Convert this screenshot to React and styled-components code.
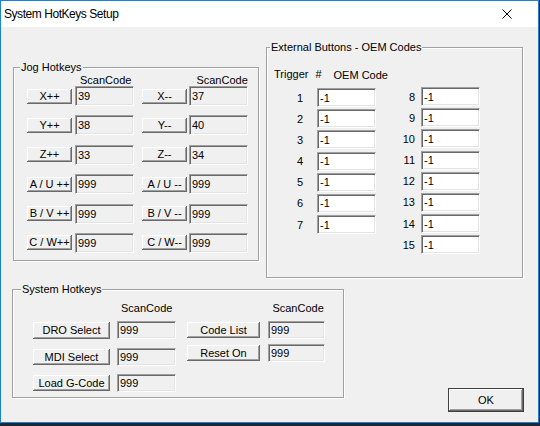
import React from "react";
import styled, { createGlobalStyle } from "styled-components";

const GlobalStyle = createGlobalStyle`
  html, body {
    margin: 0;
    padding: 0;
    background: #1d2733;
  }
  body {
    width: 540px;
    height: 426px;
    overflow: hidden;
    font-family: "Liberation Sans", Arial, sans-serif;
    font-size: 11px;
    color: #000;
  }
  * { box-sizing: border-box; }
`;

const jogRows = [
  ["X++", "39", "X--", "37"],
  ["Y++", "38", "Y--", "40"],
  ["Z++", "33", "Z--", "34"],
  ["A / U ++", "999", "A / U --", "999"],
  ["B / V ++", "999", "B / V --", "999"],
  ["C / W++", "999", "C / W--", "999"],
];

const Window = styled.div`
  width: 539px;
  height: 423px;
  border: 1px solid #1883d7;
  background: #f0f0f0;
  display: flex;
  flex-direction: column;
`;

const TitleBar = styled.div`
  height: 26px;
  background: #fff;
  display: flex;
  align-items: center;
  justify-content: space-between;
  padding: 0 26px 0 3px;
  flex-shrink: 0;
`;

const Title = styled.span`
  font-family: "Liberation Sans", Arial, sans-serif;
  font-size: 12px;
  letter-spacing: -0.45px;
  color: #000;
`;

const Body = styled.div`
  display: flex;
  flex-direction: column;
`;

const TopRow = styled.div`
  display: flex;
  align-items: flex-start;
  padding-left: 12px;
`;

const BottomRow = styled.div`
  display: flex;
  align-items: flex-start;
  padding-left: 11px;
  margin-top: 11px;
`;

const Group = styled.div`
  position: relative;
  width: ${(p) => p.w}px;
  height: ${(p) => p.h}px;
  margin-top: ${(p) => p.top || 0}px;
  margin-left: ${(p) => p.left || 0}px;
  border: 1px solid #a0a0a0;
  box-shadow: inset 1px 1px 0 #fff, 1px 1px 0 #fff;
`;

const Legend = styled.span`
  position: absolute;
  top: -7px;
  left: ${(p) => p.x}px;
  padding: 0 1px;
  line-height: 13px;
  background: #f0f0f0;
  white-space: nowrap;
`;

const Header = styled.div`
  display: flex;
  height: 12px;
  line-height: 12px;
  margin-top: ${(p) => p.top}px;
`;

const HeaderText = styled.span`
  display: block;
  margin-left: ${(p) => p.x}px;
  white-space: nowrap;
`;

const Btn = styled.button`
  width: ${(p) => p.w}px;
  height: ${(p) => p.h}px;
  margin: 0;
  padding: 0;
  background: #f0f0f0;
  font-family: "Liberation Sans", Arial, sans-serif;
  font-size: 11px;
  color: #000;
  border: none;
  box-shadow: inset -1px -1px 0 #696969, inset 1px 1px 0 #fff,
    inset -2px -2px 0 #a0a0a0;
  white-space: nowrap;
  line-height: 1;
  cursor: pointer;
`;

const Field = styled.div`
  width: ${(p) => p.w}px;
  height: ${(p) => p.h}px;
  margin-left: ${(p) => p.left || 0}px;
  background: ${(p) => (p.white ? "#fff" : "#f0f0f0")};
  border-top: 1px solid #a0a0a0;
  border-left: 1px solid #a0a0a0;
  border-bottom: 1px solid #fff;
  border-right: 1px solid #fff;
  box-shadow: inset 1px 1px 0 #696969, inset -1px -1px 0 #e3e3e3;
  padding-left: 2px;
  display: flex;
  align-items: center;
  white-space: nowrap;
`;

const JogList = styled.div`
  display: flex;
  flex-direction: column;
  gap: 9.4px;
  padding-left: 13px;
`;

const JogRow = styled.div`
  display: flex;
  align-items: center;
  height: 20px;
`;

const Pair = styled.div`
  display: flex;
  align-items: center;
  gap: ${(p) => p.gap}px;
  margin-left: ${(p) => p.left || 0}px;
`;

const OemHead = styled.div`
  display: flex;
  align-items: baseline;
  margin-top: 20px;
  padding-left: 7px;
  height: 13px;
  line-height: 13px;
`;

const OemHeadText = styled.span`
  margin-left: ${(p) => p.x || 0}px;
  white-space: nowrap;
  position: relative;
  top: ${(p) => p.dy || 0}px;
`;

const OemCols = styled.div`
  display: flex;
  align-items: flex-start;
  margin-top: 6px;
`;

const OemCol = styled.div`
  display: flex;
  flex-direction: column;
  gap: 2.2px;
  margin-top: ${(p) => p.top || 0}px;
  margin-left: ${(p) => p.left}px;
`;

const OemRow = styled.div`
  display: flex;
  align-items: center;
  height: 19px;
`;

const Num = styled.span`
  width: ${(p) => p.w}px;
  text-align: right;
  margin-right: ${(p) => p.gap}px;
`;

const SysCols = styled.div`
  display: flex;
  align-items: flex-start;
  margin-top: 7px;
`;

const SysCol = styled.div`
  display: flex;
  flex-direction: column;
  margin-left: ${(p) => p.left}px;
`;

const SysRow = styled.div`
  display: flex;
  align-items: center;
  height: 18px;
  margin-top: ${(p) => p.top}px;
`;

const OkButton = styled.button`
  width: 76px;
  height: 24px;
  margin: 99px 0 0 104px;
  padding: 0;
  background: #f0f0f0;
  font-family: "Liberation Sans", Arial, sans-serif;
  font-size: 11px;
  color: #000;
  border: 1px solid #404040;
  box-shadow: inset -1px -1px 0 #696969, inset 1px 1px 0 #fff,
    inset -2px -2px 0 #a0a0a0;
  cursor: pointer;
`;

const CloseIcon = () => (
  <svg width="10" height="10" viewBox="0 0 10 10">
    <path d="M0.5 0.5 L9.5 9.5 M9.5 0.5 L0.5 9.5" stroke="#000" strokeWidth="1" fill="none" />
  </svg>
);

const App = () => {
  const oemLeft = [1, 2, 3, 4, 5, 6, 7];
  const oemRight = [8, 9, 10, 11, 12, 13, 14, 15];

  return (
    <>
      <GlobalStyle />
      <Window>
        <TitleBar>
          <Title>System HotKeys Setup</Title>
          <CloseIcon />
        </TitleBar>
        <Body>
          <TopRow>
            <Group w={246} h={194} top={40}>
              <Legend x={6}>Jog Hotkeys</Legend>
              <Header top={6}>
                <HeaderText x={66}>ScanCode</HeaderText>
                <HeaderText x={65}>ScanCode</HeaderText>
              </Header>
              <JogList>
                {jogRows.map(([a, av, b, bv]) => (
                  <JogRow key={a}>
                    <Pair gap={3}>
                      <Btn w={45} h={15}>{a}</Btn>
                      <Field w={59} h={20}>{av}</Field>
                    </Pair>
                    <Pair gap={2} left={8}>
                      <Btn w={45} h={15}>{b}</Btn>
                      <Field w={59} h={20}>{bv}</Field>
                    </Pair>
                  </JogRow>
                ))}
              </JogList>
            </Group>

            <Group w={257} h={231} top={20} left={7}>
              <Legend x={3}>External Buttons - OEM Codes</Legend>
              <OemHead>
                <OemHeadText>Trigger</OemHeadText>
                <OemHeadText x={7}>#</OemHeadText>
                <OemHeadText x={12} dy={1}>OEM Code</OemHeadText>
              </OemHead>
              <OemCols>
                <OemCol left={0} top={1}>
                  {oemLeft.map((n) => (
                    <OemRow key={n}>
                      <Num w={36} gap={14}>{n}</Num>
                      <Field w={59} h={19} white>-1</Field>
                    </OemRow>
                  ))}
                </OemCol>
                <OemCol left={9}>
                  {oemRight.map((n) => (
                    <OemRow key={n}>
                      <Num w={30} gap={6}>{n}</Num>
                      <Field w={59} h={19} white>-1</Field>
                    </OemRow>
                  ))}
                </OemCol>
              </OemCols>
            </Group>
          </TopRow>

          <BottomRow>
            <Group w={332} h={109}>
              <Legend x={8}>System Hotkeys</Legend>
              <Header top={12}>
                <HeaderText x={108}>ScanCode</HeaderText>
                <HeaderText x={100}>ScanCode</HeaderText>
              </Header>
              <SysCols>
                <SysCol left={20}>
                  <SysRow top={0}>
                    <Btn w={77} h={17}>DRO Select</Btn>
                    <Field w={59} h={18} left={7}>999</Field>
                  </SysRow>
                  <SysRow top={9}>
                    <Btn w={77} h={16}>MDI Select</Btn>
                    <Field w={59} h={18} left={7}>999</Field>
                  </SysRow>
                  <SysRow top={8}>
                    <Btn w={77} h={16}>Load G-Code</Btn>
                    <Field w={59} h={18} left={7}>999</Field>
                  </SysRow>
                </SysCol>
                <SysCol left={11}>
                  <SysRow top={0}>
                    <Btn w={73} h={16}>Code List</Btn>
                    <Field w={57} h={18} left={8}>999</Field>
                  </SysRow>
                  <SysRow top={5}>
                    <Btn w={73} h={16}>Reset On</Btn>
                    <Field w={57} h={18} left={8}>999</Field>
                  </SysRow>
                </SysCol>
              </SysCols>
            </Group>
            <OkButton>OK</OkButton>
          </BottomRow>
        </Body>
      </Window>
    </>
  );
};

export default App;
